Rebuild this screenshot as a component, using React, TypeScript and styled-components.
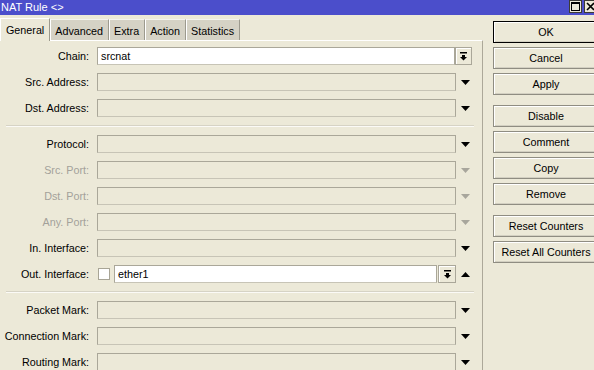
import React from "react";
import styled, { createGlobalStyle } from "styled-components";

const Global = createGlobalStyle`
  html, body { margin: 0; padding: 0; }
  body {
    width: 594px; height: 370px; overflow: hidden;
    background: #ece9d8;
    font-family: "Liberation Sans", Arial, sans-serif;
    font-size: 10.75px;
    color: #000;
  }
`;

const Window = styled.div`
  width: 594px;
  height: 370px;
  display: flex;
  flex-direction: column;
  overflow: hidden;
`;

const TitleBar = styled.div`
  height: 15px;
  flex: none;
  background: #4b4ecb;
  color: #fff;
  display: flex;
  align-items: center;
  padding-left: 1px;
  font-size: 11px;
`;

const TitleText = styled.div`
  flex: 1;
  line-height: 15px;
`;

const TitleButtons = styled.div`
  display: flex;
  align-self: flex-start;
  gap: 2px;
  margin-right: -3px;
`;

const TitleButton = styled.div`
  width: 11px;
  height: 11px;
  background: #ece9d8;
  border: 1px solid #3c3b36;
  display: flex;
  align-items: center;
  justify-content: center;
`;

const Body = styled.div`
  flex: 1;
  display: grid;
  grid-template-columns: 483px 1fr;
  margin-top: 2px;
  min-height: 0;
`;

const Left = styled.div`
  display: flex;
  flex-direction: column;
  min-height: 0;
`;

const TabStrip = styled.div`
  height: 23px;
  display: flex;
  align-items: flex-end;
  flex: none;
`;

const Tab = styled.div<{ $active?: boolean }>`
  height: ${(p) => (p.$active ? "23px" : "21px")};
  padding: 0 ${(p) => (p.$active ? "5px 0 5px" : "5px 0 4px")};
  box-sizing: border-box;
  display: flex;
  align-items: center;
  background: ${(p) => (p.$active ? "#ece9d8" : "#d5d2c5")};
  border-left: 1px solid #fff;
  border-top: 1px solid ${(p) => (p.$active ? "#fff" : "#f4f3ee")};
  border-right: 1px solid #9c9a8e;
  margin-bottom: ${(p) => (p.$active ? "-1px" : "0")};
  position: relative;
  z-index: ${(p) => (p.$active ? 1 : 0)};
  padding-top: ${(p) => (p.$active ? "0" : "1px")};
`;

const Panel = styled.div`
  flex: 1;
  border-top: 1px solid #fff;
  border-right: 1px solid #aca899;
  padding-top: 6px;
  display: flex;
  flex-direction: column;
  gap: 8px;
  min-height: 0;
`;

const Row = styled.div`
  display: grid;
  grid-template-columns: 97px 359px 1fr;
  height: 18px;
  flex: none;
  align-items: center;
`;

const Label = styled.div<{ $disabled?: boolean }>`
  text-align: right;
  white-space: nowrap;
  color: ${(p) => (p.$disabled ? "#a3a19a" : "#000")};
  padding-right: 8px;
`;

const Field = styled.div`
  display: flex;
  align-items: center;
  height: 18px;
`;

const Input = styled.div<{ $filled?: boolean; $short?: boolean }>`
  flex: 1;
  height: 18px;
  box-sizing: border-box;
  border: 1px solid #aaa799;
  border-bottom-color: #c7c4b6;
  background: ${(p) => (p.$filled ? "#fff" : "#ece9d8")};
  padding-left: 3px;
  display: flex;
  align-items: center;
  white-space: nowrap;
  overflow: hidden;
  margin-right: ${(p) => (p.$short ? "1px" : "0")};
`;

const Check = styled.div`
  width: 12px;
  height: 12px;
  box-sizing: border-box;
  border: 1px solid #a8a596;
  background: #fff;
  margin: 0 4px 0 1px;
  flex: none;
`;

const ListButton = styled.div<{ $side?: boolean }>`
  width: ${(p) => (p.$side ? "17px" : "18px")};
  height: 18px;
  box-sizing: border-box;
  border: 1px solid #aaa799;
  background: #ece9d8;
  box-shadow: inset 1px 1px 0 #fff;
  display: flex;
  align-items: center;
  justify-content: center;
  flex: none;
  margin-left: ${(p) => (p.$side ? "-6px" : "1px")};
`;

const ArrowCell = styled.div`
  display: flex;
  align-items: center;
  padding-left: 5px;
  height: 18px;
`;

const Separator = styled.div`
  height: 1px;
  flex: none;
  margin: 0 8px 0 6px;
  background: #d6d3c5;
  border-bottom: 1px solid #fbfaf6;
`;

const Buttons = styled.div`
  display: flex;
  flex-direction: column;
  padding-left: 10px;
  padding-top: 4px;
  gap: 4px;
`;

const Btn = styled.div<{ $default?: boolean; $gapBefore?: boolean }>`
  width: 106px;
  height: 22px;
  box-sizing: border-box;
  flex: none;
  border: 1px solid ${(p) => (p.$default ? "#000" : "#8f8d82")};
  box-shadow: inset 1px 1px 0 #fff, inset -1px -1px 0 #d3d0c2;
  background: #ece9d8;
  display: flex;
  align-items: center;
  justify-content: center;
  white-space: nowrap;
  margin-top: ${(p) => (p.$gapBefore ? "6px" : "0")};
`;

const Tri = ({ up, disabled }: { up?: boolean; disabled?: boolean }) => (
  <svg width="9" height="5" viewBox="0 0 9 5" style={{ display: "block" }}>
    <polygon
      points={up ? "0,5 9,5 4.5,0" : "0,0 9,0 4.5,5"}
      fill={disabled ? "#a8a69c" : "#000"}
    />
  </svg>
);

const ListIcon = () => (
  <svg width="7" height="9" viewBox="0 0 7 9" style={{ display: "block" }}>
    <rect x="0" y="0" width="7" height="1.5" fill="#000" />
    <rect x="2" y="3" width="3" height="2" fill="#000" />
    <polygon points="0,5 7,5 3.5,8.5" fill="#000" />
  </svg>
);

type RowDef =
  | { kind: "sep" }
  | {
      kind: "row";
      label: string;
      disabled?: boolean;
      value?: string;
      type?: "chain" | "out" | "plain";
      arrow?: "down" | "up" | "none";
    };

const rows: RowDef[] = [
  { kind: "row", label: "Chain:", value: "srcnat", type: "chain", arrow: "none" },
  { kind: "row", label: "Src. Address:" },
  { kind: "row", label: "Dst. Address:" },
  { kind: "sep" },
  { kind: "row", label: "Protocol:" },
  { kind: "row", label: "Src. Port:", disabled: true },
  { kind: "row", label: "Dst. Port:", disabled: true },
  { kind: "row", label: "Any. Port:", disabled: true },
  { kind: "row", label: "In. Interface:" },
  { kind: "row", label: "Out. Interface:", value: "ether1", type: "out", arrow: "up" },
  { kind: "sep" },
  { kind: "row", label: "Packet Mark:" },
  { kind: "row", label: "Connection Mark:" },
  { kind: "row", label: "Routing Mark:" },
];

const tabs = ["General", "Advanced", "Extra", "Action", "Statistics"];

const buttons: { label: string; def?: boolean; gap?: boolean }[] = [
  { label: "OK", def: true },
  { label: "Cancel" },
  { label: "Apply" },
  { label: "Disable", gap: true },
  { label: "Comment" },
  { label: "Copy" },
  { label: "Remove" },
  { label: "Reset Counters", gap: true },
  { label: "Reset All Counters" },
];

export default function App() {
  return (
    <Window>
      <Global />
      <TitleBar>
        <TitleText>NAT Rule &lt;&gt;</TitleText>
        <TitleButtons>
          <TitleButton>
            <svg width="9" height="9" viewBox="0 0 9 9" style={{ display: "block" }}>
              <rect x="0.5" y="0.5" width="8" height="8" fill="none" stroke="#000" />
              <rect x="0" y="0" width="9" height="2" fill="#000" />
            </svg>
          </TitleButton>
          <TitleButton>
            <svg width="9" height="9" viewBox="0 0 9 9" style={{ display: "block" }}>
              <path d="M1 1 L8 8 M8 1 L1 8" stroke="#000" strokeWidth="1.6" />
            </svg>
          </TitleButton>
        </TitleButtons>
      </TitleBar>
      <Body>
        <Left>
          <TabStrip>
            {tabs.map((t, i) => (
              <Tab key={t} $active={i === 0}>
                {t}
              </Tab>
            ))}
          </TabStrip>
          <Panel>
            {rows.map((r, i) => {
              if (r.kind === "sep") return <Separator key={i} />;
              const arrow = r.arrow ?? "down";
              return (
                <Row key={i}>
                  <Label $disabled={r.disabled}>{r.label}</Label>
                  <Field>
                    {r.type === "out" && <Check />}
                    <Input $filled={!!r.value} $short={r.type === "chain"}>
                      {r.value}
                    </Input>
                    {r.type === "out" && (
                      <ListButton>
                        <ListIcon />
                      </ListButton>
                    )}
                  </Field>
                  <ArrowCell>
                    {r.type === "chain" ? (
                      <ListButton $side>
                        <ListIcon />
                      </ListButton>
                    ) : arrow !== "none" ? (
                      <Tri up={arrow === "up"} disabled={r.disabled} />
                    ) : null}
                  </ArrowCell>
                </Row>
              );
            })}
          </Panel>
        </Left>
        <Buttons>
          {buttons.map((b) => (
            <Btn key={b.label} $default={b.def} $gapBefore={b.gap}>
              {b.label}
            </Btn>
          ))}
        </Buttons>
      </Body>
    </Window>
  );
}
